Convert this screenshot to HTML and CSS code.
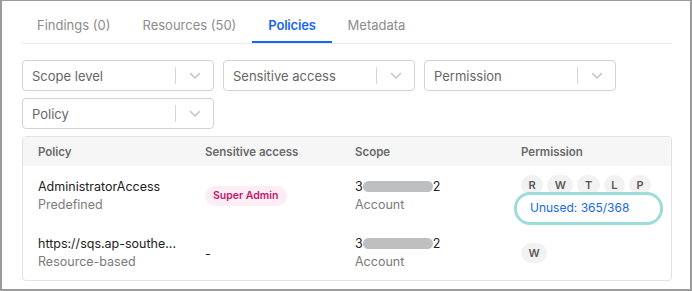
FILE: index.html
```html
<!DOCTYPE html>
<html lang="en">
<head>
    <meta charset="UTF-8">
    <title>Policies</title>
    <link rel="stylesheet" href="styles.css">
</head>
<body>
    <div class="frame">
        <div class="tabs">
            <div class="tab">Findings (0)</div>
            <div class="tab">Resources (50)</div>
            <div class="tab active">Policies</div>
            <div class="tab">Metadata</div>
        </div>

        <div class="filters">
            <div class="select"><span class="select-label">Scope level</span><span class="select-sep"></span><span class="select-arrow"><svg width="12" height="8" viewBox="0 0 12 8"><path d="M1.5 1.5 6 6l4.5-4.5" fill="none" stroke="#c4c4c4" stroke-width="1.5" stroke-linecap="round" stroke-linejoin="round"/></svg></span></div>
            <div class="select"><span class="select-label">Sensitive access</span><span class="select-sep"></span><span class="select-arrow"><svg width="12" height="8" viewBox="0 0 12 8"><path d="M1.5 1.5 6 6l4.5-4.5" fill="none" stroke="#c4c4c4" stroke-width="1.5" stroke-linecap="round" stroke-linejoin="round"/></svg></span></div>
            <div class="select"><span class="select-label">Permission</span><span class="select-sep"></span><span class="select-arrow"><svg width="12" height="8" viewBox="0 0 12 8"><path d="M1.5 1.5 6 6l4.5-4.5" fill="none" stroke="#c4c4c4" stroke-width="1.5" stroke-linecap="round" stroke-linejoin="round"/></svg></span></div>
            <div class="select"><span class="select-label">Policy</span><span class="select-sep"></span><span class="select-arrow"><svg width="12" height="8" viewBox="0 0 12 8"><path d="M1.5 1.5 6 6l4.5-4.5" fill="none" stroke="#c4c4c4" stroke-width="1.5" stroke-linecap="round" stroke-linejoin="round"/></svg></span></div>
        </div>

        <div class="table-wrap">
            <table class="policies">
                <colgroup>
                    <col style="width: 167px">
                    <col style="width: 150px">
                    <col style="width: 166px">
                    <col>
                </colgroup>
                <thead>
                    <tr>
                        <th>Policy</th>
                        <th>Sensitive access</th>
                        <th>Scope</th>
                        <th>Permission</th>
                    </tr>
                </thead>
                <tbody>
                    <tr>
                        <td>
                            <div class="name">AdministratorAccess</div>
                            <div class="sub">Predefined</div>
                        </td>
                        <td><span class="badge">Super Admin</span></td>
                        <td>
                            <div class="name">3<span class="redacted"></span>2</div>
                            <div class="sub">Account</div>
                        </td>
                        <td>
                            <div class="perms">
                                <span class="perm">R</span>
                                <span class="perm">W</span>
                                <span class="perm">T</span>
                                <span class="perm">L</span>
                                <span class="perm">P</span>
                            </div>
                            <a class="unused" href="#">Unused: 365/368</a>
                        </td>
                    </tr>
                    <tr>
                        <td>
                            <div class="name">https://sqs.ap-southe...</div>
                            <div class="sub">Resource-based</div>
                        </td>
                        <td>-</td>
                        <td>
                            <div class="name">3<span class="redacted"></span>2</div>
                            <div class="sub">Account</div>
                        </td>
                        <td>
                            <div class="perms">
                                <span class="perm">W</span>
                            </div>
                        </td>
                    </tr>
                </tbody>
            </table>
        </div>
    </div>
</body>
</html>
```

FILE: styles.css
```css
* {
    margin: 0;
    padding: 0;
    box-sizing: border-box;
}

body {
    background: #fff;
    color: #222;
    font-family: Inter, "Open Sans", sans-serif;
    font-size: 13px;
}

.frame {
    width: 692px;
    height: 291px;
    border: 2px solid #9b9b9b;
    border-top-width: 1px;
    padding: 0 18px 0 19px;
    overflow: hidden;
}

.tabs {
    display: flex;
    height: 43px;
    border-bottom: 1px solid #ececec;
}

.tab {
    padding: 8px 16px 0;
    line-height: 32px;
    color: #8c8c8c;
    border-bottom: 2px solid transparent;
}

.tab.active {
    color: #1668f2;
    font-weight: 600;
    letter-spacing: -0.2px;
    border-bottom-color: #1668f2;
}

.filters {
    display: flex;
    flex-wrap: wrap;
    gap: 7px 9px;
    margin: 16px 0 0 1px;
    width: 600px;
}

.select {
    display: flex;
    align-items: center;
    width: 192px;
    height: 31px;
    border: 1px solid #d3d3d3;
    border-radius: 4px;
    color: #666;
}

.select-label {
    flex: 1;
    padding-left: 9px;
}

.select-sep {
    width: 1px;
    height: 17px;
    background: #d6d6d6;
}

.select-arrow {
    display: flex;
    justify-content: center;
    width: 37px;
}

.table-wrap {
    margin: 7px 0 0 1px;
    border: 1px solid #e2e2e2;
    border-radius: 4px;
    overflow: hidden;
}

.policies {
    width: 100%;
    border-collapse: collapse;
    table-layout: fixed;
}

.policies th {
    background: #f6f6f6;
    height: 29px;
    padding: 0 15px;
    text-align: left;
    font-size: 11.5px;
    font-weight: 600;
    color: #6a6a6a;
}

.policies td {
    padding: 9px 15px;
    vertical-align: middle;
    font-size: 12.5px;
}

.name {
    line-height: 18px;
    color: #222;
    white-space: nowrap;
}

.sub {
    line-height: 18px;
    color: #7b7b7b;
}

.redacted {
    display: inline-block;
    width: 70px;
    height: 11px;
    background: #bebfc1;
    border-radius: 6px;
    vertical-align: -1px;
}

.badge {
    display: inline-block;
    padding: 0 8px;
    line-height: 20px;
    border-radius: 10px;
    background: #fdeef5;
    color: #c2176a;
    font-size: 10.5px;
    font-weight: 600;
}

.perms {
    display: flex;
    gap: 4px;
}

.perm {
    min-width: 21px;
    height: 20px;
    padding: 0 7.5px;
    line-height: 20px;
    border-radius: 10px;
    background: #f2f2f2;
    color: #5a5a5a;
    font-size: 11px;
    font-weight: 600;
    text-align: center;
}

.unused {
    position: relative;
    display: inline-block;
    margin: 3px 0 0 9px;
    line-height: 19px;
    font-size: 12px;
    color: #1668f2;
    text-decoration: none;
}

.unused::after {
    content: "";
    position: absolute;
    top: -6px;
    bottom: -8px;
    left: -16px;
    right: -34px;
    border: 3px solid #9ddcdb;
    border-radius: 16px;
}
```
